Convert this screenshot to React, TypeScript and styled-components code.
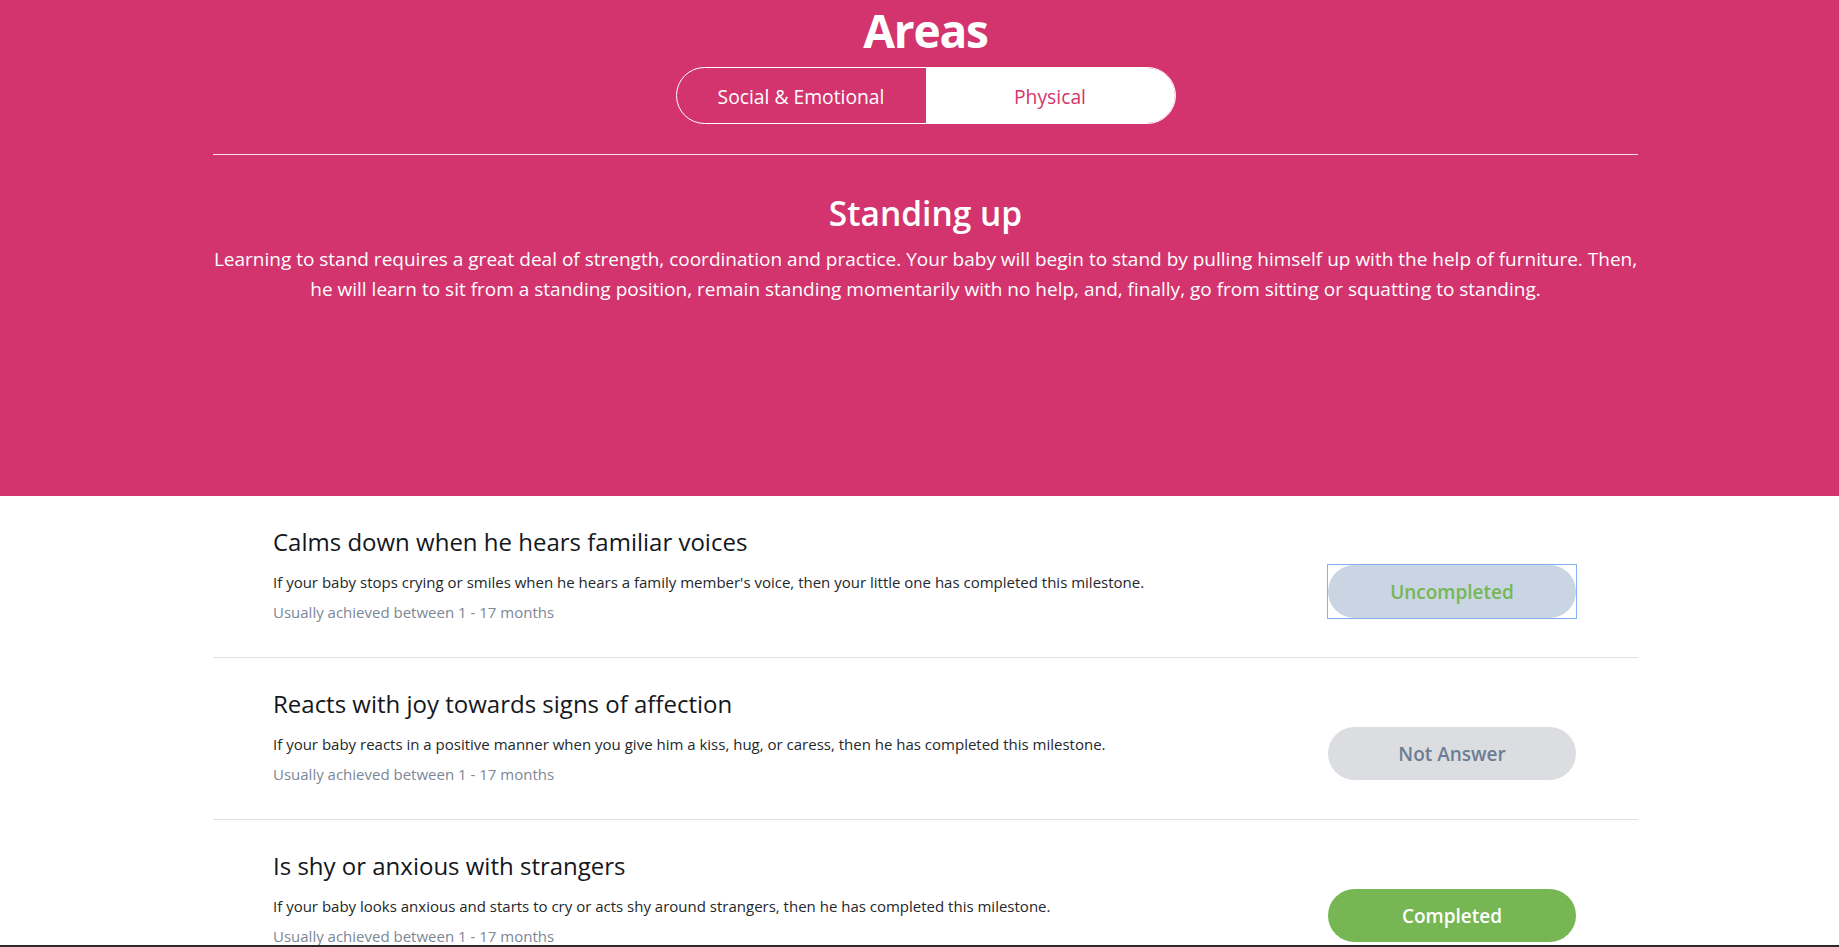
import React from "react";
import styled, { createGlobalStyle, css } from "styled-components";

const FONT = `"Segoe UI", "Open Sans", "Noto Sans", sans-serif`;

const GlobalStyle = createGlobalStyle`
  html, body { margin: 0; padding: 0; background: #ffffff; scrollbar-width: none; }
  html::-webkit-scrollbar, body::-webkit-scrollbar { display: none; }
  body { font-family: ${FONT}; -webkit-font-smoothing: antialiased; }
  * { box-sizing: border-box; }
`;

const Page = styled.div`
  min-height: 100vh;
  background: #ffffff;
`;

const Hero = styled.header`
  background: #d3346e;
  height: 496px;
  padding-left: 12px;
`;

const Container = styled.div`
  max-width: 1425px;
  margin: 0 auto;
`;

const HeroInner = styled(Container)`
  display: flex;
  flex-direction: column;
  align-items: center;
  text-align: center;
  color: #ffffff;
`;

const PageTitle = styled.h1`
  margin: 0;
  font-size: 46px;
  line-height: 60px;
  font-weight: 700;
  letter-spacing: -1.2px;
`;

const Toggle = styled.div`
  margin-top: 7px;
  display: grid;
  grid-template-columns: 1fr 1fr;
  width: 500px;
  height: 57px;
  border: 1px solid #ffffff;
  border-radius: 29px;
  overflow: hidden;
`;

const ToggleOption = styled.button<{ $active?: boolean }>`
  border: none;
  margin: 0;
  padding-top: 2px;
  font-family: ${FONT};
  font-size: 19.3px;
  font-weight: 400;
  cursor: pointer;
  ${({ $active }) =>
    $active
      ? css`
          background: #ffffff;
          color: #d3346e;
        `
      : css`
          background: transparent;
          color: #ffffff;
        `}
`;

const Rule = styled.hr`
  align-self: stretch;
  margin: 30px 0 0;
  border: none;
  height: 1px;
  background: rgba(255, 255, 255, 0.85);
`;

const SectionTitle = styled.h2`
  margin: 37px 0 0;
  font-size: 33.5px;
  line-height: 42px;
  font-weight: 600;
`;

const SectionText = styled.p`
  margin: 11px 0 0;
  font-size: 19px;
  line-height: 29.5px;
  font-weight: 400;
`;

const List = styled(Container)`
  display: flex;
  flex-direction: column;
`;

const ListWrap = styled.main`
  padding-left: 12px;
`;

const Item = styled.section`
  padding: 28px 61px 33px 60px;
  border-bottom: 1px solid #e0e1e4;
`;

const ItemTitle = styled.h3`
  margin: 0;
  font-size: 24px;
  line-height: 36px;
  font-weight: 500;
  color: #14171c;
`;

const ItemRow = styled.div`
  margin-top: 4px;
  display: flex;
  align-items: flex-start;
  justify-content: space-between;
  gap: 40px;
`;

const ItemText = styled.div`
  padding-top: 6px;
  display: flex;
  flex-direction: column;
  gap: 6px;
`;

const Description = styled.p`
  margin: 0;
  font-size: 15px;
  line-height: 24px;
  color: #24272b;
`;

const Age = styled.span`
  font-size: 15px;
  line-height: 24px;
  color: #7c8797;
`;

type Status = "uncompleted" | "none" | "completed";

const statusStyles: Record<Status, ReturnType<typeof css>> = {
  uncompleted: css`
    background: #c9d5e3;
    color: #76b753;
  `,
  none: css`
    background: #dcdde1;
    color: #6c7d94;
  `,
  completed: css`
    background: #76b753;
    color: #ffffff;
  `,
};

const ButtonFrame = styled.div<{ $focused?: boolean }>`
  flex: none;
  border: 1px solid ${({ $focused }) => ($focused ? "#84aef6" : "transparent")};
`;

const StatusButton = styled.button<{ $status: Status }>`
  display: block;
  width: 248px;
  height: 53px;
  border: none;
  border-radius: 27px;
  font-family: ${FONT};
  font-size: 19px;
  font-weight: 600;
  cursor: pointer;
  ${({ $status }) => statusStyles[$status]}
`;

const BottomEdge = styled.div`
  position: fixed;
  left: 0;
  right: 0;
  bottom: 0;
  height: 2px;
  background: #2a2a2a;
`;

const milestones: {
  title: string;
  text: string;
  status: Status;
  label: string;
  focused?: boolean;
}[] = [
  {
    title: "Calms down when he hears familiar voices",
    text: "If your baby stops crying or smiles when he hears a family member's voice, then your little one has completed this milestone.",
    status: "uncompleted",
    label: "Uncompleted",
    focused: true,
  },
  {
    title: "Reacts with joy towards signs of affection",
    text: "If your baby reacts in a positive manner when you give him a kiss, hug, or caress, then he has completed this milestone.",
    status: "none",
    label: "Not Answer",
  },
  {
    title: "Is shy or anxious with strangers",
    text: "If your baby looks anxious and starts to cry or acts shy around strangers, then he has completed this milestone.",
    status: "completed",
    label: "Completed",
  },
];

export default function App() {
  return (
    <Page>
      <GlobalStyle />
      <Hero>
        <HeroInner>
          <PageTitle>Areas</PageTitle>
          <Toggle>
            <ToggleOption>Social &amp; Emotional</ToggleOption>
            <ToggleOption $active>Physical</ToggleOption>
          </Toggle>
          <Rule />
          <SectionTitle>Standing up</SectionTitle>
          <SectionText>
            Learning to stand requires a great deal of strength, coordination and practice. Your baby will begin to
            stand by pulling himself up with the help of furniture. Then, he will learn to sit from a standing
            position, remain standing momentarily with no help, and, finally, go from sitting or squatting to
            standing.
          </SectionText>
        </HeroInner>
      </Hero>
      <ListWrap>
        <List>
          {milestones.map((m) => (
            <Item key={m.title}>
              <ItemTitle>{m.title}</ItemTitle>
              <ItemRow>
                <ItemText>
                  <Description>{m.text}</Description>
                  <Age>Usually achieved between 1 - 17 months</Age>
                </ItemText>
                <ButtonFrame $focused={m.focused}>
                  <StatusButton $status={m.status}>{m.label}</StatusButton>
                </ButtonFrame>
              </ItemRow>
            </Item>
          ))}
        </List>
      </ListWrap>
      <BottomEdge />
    </Page>
  );
}
